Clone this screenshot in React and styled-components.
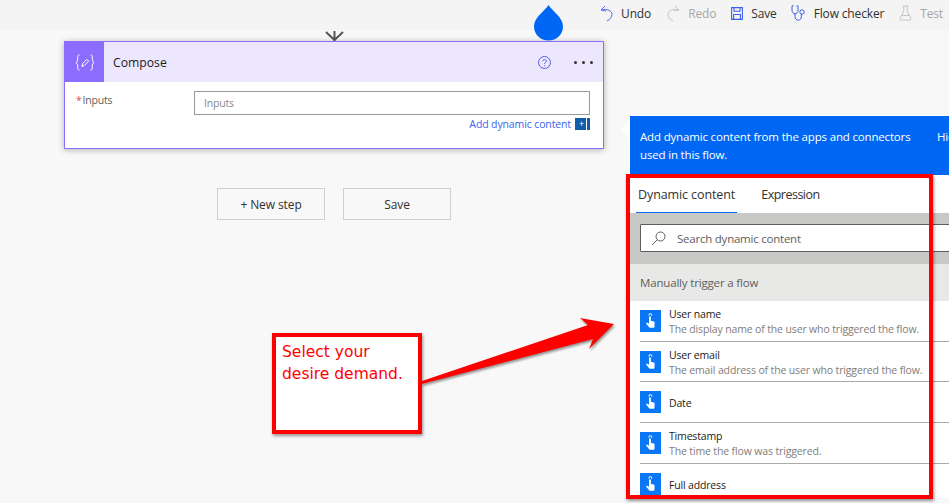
import React from "react";
import styled, { createGlobalStyle } from "styled-components";

const Global = createGlobalStyle`
  html, body { margin: 0; padding: 0; background: #f8f8f8; }
  * { box-sizing: border-box; }
`;
const Page = styled.div`
  position: relative; width: 949px; height: 503px; overflow: hidden;
  background: #f8f8f8; font-family: "Open Sans", "Noto Sans", sans-serif; color: #252423;
`;
const Toolbar = styled.header`
  height: 30px; background: #f4f4f4; display: flex; justify-content: flex-end; align-items: center;
  padding-right: 6px; gap: 15px; padding-bottom: 4px;
`;
const ToolButton = styled.div`
  display: flex; align-items: center; gap: 8px; font-size: 12px; letter-spacing: -0.15px;
  margin-right: ${p => p.$mr || 0}px;
  color: ${p => (p.$off ? "#a6a6a6" : "#323130")};
  svg { display: block; flex: none; }
`;
const Canvas = styled.main`
  width: 540px; margin-left: 64px; display: flex; flex-direction: column; align-items: center;
`;
const Connector = styled.svg`display: block; width: 19px; height: 11px; flex: none;`;
const Card = styled.section`
  width: 540px; height: 108px; background: #fff; border: 1px solid #8c6cff;
  box-shadow: 0 1px 6px rgba(0,0,0,.3);
`;
const CardHead = styled.div`
  height: 40px; background: #ede7fd; display: flex; align-items: center; padding-right: 10px;
`;
const CardIcon = styled.div`
  width: 39px; height: 40px; background: #8a6cff; display: flex; align-items: center; justify-content: center;
  color: #fff; font-size: 17px; flex: none;
`;
const CardTitle = styled.div`margin-left: 9px; font-size: 12.2px; color: #1b1a19; flex: 1;`;
const Dots = styled.div`
  display: flex; gap: 5px; margin-left: 23px; width: 19px;
  i { width: 3px; height: 3px; border-radius: 50%; background: #323130; display: block; flex: none; }
`;
const CardBody = styled.div`padding: 9px 13px 0 11px;`;
const FieldRow = styled.div`display: flex; align-items: flex-start;`;
const Label = styled.div`
  width: 118px; font-size: 10.5px; letter-spacing: -0.2px; color: #605e5c; padding-top: 2px;
  b { color: #e8474f; font-weight: 400; margin-right: 1px; }
`;
const Input = styled.div`
  flex: 1; height: 24px; border: 1px solid #999; font-size: 10.5px; letter-spacing: -0.2px; color: #8a8886;
  padding-left: 9px; line-height: 22px;
`;
const DynamicRow = styled.div`
  display: flex; justify-content: flex-end; align-items: center; gap: 4px; margin-top: 2px;
  font-size: 10.5px; letter-spacing: -0.12px; color: #3b63f0; height: 14px;
`;
const PlusBox = styled.div`
  width: 15px; height: 12px; background: #0f5ea8; color: #fff; font-size: 9px; line-height: 12px;
  display: flex; justify-content: space-between; padding-left: 4px;
  &::after { content: ""; width: 1px; margin-right: 3px; background: #fff; }
`;
const Actions = styled.div`display: flex; gap: 18px; margin-top: 39px;`;
const ActionButton = styled.button`
  width: 108px; height: 32px; background: #f8f8f8; border: 1px solid #cfcfcf; font: inherit;
  font-size: 12px; letter-spacing: -0.1px; color: #323130; padding: 0;
`;
const Drop = styled.svg`position: absolute; left: 533px; top: 4px; width: 31px; height: 37px;`;
const Panel = styled.aside`
  position: absolute; left: 629px; top: 115px; width: 340px; height: 383px; background: #fff;
`;
const PanelClip = styled.div`height: 100%; overflow: hidden;`;
const Caret = styled.div`
  position: absolute; left: -6px; top: 8px; width: 13px; height: 13px; background: #fff; z-index: 1;
  transform: rotate(45deg); clip-path: polygon(0 0, 0 100%, 100% 100%);
`;
const PanelHead = styled.div`
  height: 60px; background: #0067f5; color: #fff; border-left: 1px solid #fff; border-top: 1px solid #fff;
  padding: 12px 0 0 10px; font-size: 11.5px; line-height: 18px; letter-spacing: -0.17px; position: relative;
`;
const HideLink = styled.span`position: absolute; left: 307px; top: 12px;`;
const Tabs = styled.div`height: 38px; display: flex; padding-left: 7px; gap: 22px;`;
const Tab = styled.div`
  height: 38px; padding: 11px 2px 0; font-size: 12.5px;
  letter-spacing: ${p => (p.$active ? "-0.1px" : "-0.5px")}; color: #323130;
  border-bottom: ${p => (p.$active ? "1px solid #0067f5" : "none")};
`;
const SearchBand = styled.div`height: 51px; background: #c8c9c6; padding: 11px 0 0 11px;`;
const SearchBox = styled.div`
  height: 28px; background: #fff; border: 1px solid #605e5c; border-radius: 1px; display: flex; align-items: center;
  padding-left: 10px; gap: 11px; font-size: 11.5px; letter-spacing: -0.23px; color: #605e5c;
`;
const Section = styled.div`
  height: 37px; background: #e8e9e6; padding-left: 11px; font-size: 11.5px; letter-spacing: -0.17px;
  color: #605e5c; line-height: 37px;
`;
const Row = styled.div`
  height: ${p => p.$h}px; margin-left: 11px; border-bottom: 1px solid #aaa; display: flex; align-items: center; gap: 8px;
`;
const RowIcon = styled.div`
  width: 21px; height: 22px; background: #0a78f5; flex: none; display: flex; align-items: center; justify-content: center;
`;
const RowText = styled.div`padding-top: 2px;`;
const RowName = styled.div`font-size: 10.5px; letter-spacing: -0.17px; color: #1b1a19; line-height: 15px;`;
const RowDesc = styled.div`font-size: 10.5px; letter-spacing: -0.14px; color: #7f7d7b; line-height: 15px; white-space: nowrap;`;
const RedFrame = styled.div`
  position: absolute; left: 626px; top: 174px; width: 307px; height: 325px;
  border: 4px solid #ff0000; box-shadow: 1px 2px 3px rgba(0,0,0,.4);
`;
const Callout = styled.div`
  position: absolute; left: 272px; top: 333px; width: 150px; height: 101px; background: #fff;
  border: 4px solid #ff0000; box-shadow: 1px 2px 3px rgba(0,0,0,.4);
  padding: 4px 0 0 6px; color: #f00; font-family: "DejaVu Sans", sans-serif; font-size: 15.5px; line-height: 22px;
`;
const ArrowSvg = styled.svg`position: absolute; left: 415px; top: 310px; width: 205px; height: 80px; overflow: visible;`;

const Hand = () => (
  <svg width="13" height="16" viewBox="0 0 13 16" fill="none">
    <path d="M5 2.5a1.4 1.4 0 1 1 2.6.2" stroke="#fff" strokeWidth="1" />
    <path d="M5 3.5h1.9v4.2l3.6 1v4.8c0 .8-.5 1.3-1.3 1.3H5.6L2 10.5l1-.9 2 1.2z" fill="#fff" />
  </svg>
);

const rows = [
  ["User name", "The display name of the user who triggered the flow.", 41],
  ["User email", "The email address of the user who triggered the flow.", 40],
  ["Date", null, 41],
  ["Timestamp", "The time the flow was triggered.", 41],
  ["Full address", null, 41],
];

export default function App() {
  return (
    <Page>
      <Global />
      <Toolbar>
        <ToolButton $mr={1}>
          <svg width="13" height="17" viewBox="0 0 13 17" fill="none" stroke="#4f6bed" strokeWidth="1">
            <path d="M5 1 1 5l5 1" /><path d="M1.5 5C7 3.5 12 5.5 12 9.5c0 3-2 5-5 6.5" />
          </svg>
          Undo
        </ToolButton>
        <ToolButton $off>
          <svg width="13" height="17" viewBox="0 0 13 17" fill="none" stroke="#c4c4c4" strokeWidth="1">
            <path d="M8 1l4 4-5 1" /><path d="M11.5 5C6 3.5 1 5.5 1 9.5c0 3 2 5 5 6.5" />
          </svg>
          Redo
        </ToolButton>
        <ToolButton $mr={-1}>
          <svg width="12" height="13" viewBox="0 0 12 13" fill="none" stroke="#3b5ff0" strokeWidth="1.1">
            <path d="M.6.6h10.8v11.8H.6z" /><path d="M3 .6v3.6h6V.6M2.6 12.4V7.5h6.8v4.9" />
          </svg>
          Save
        </ToolButton>
        <ToolButton>
          <svg width="15" height="16" viewBox="0 0 15 16" fill="none" stroke="#3b5ff0" strokeWidth="1">
            <path d="M2.5.8H1v4.4c0 2 1.4 3.6 3 3.6s3-1.6 3-3.6V.8H5.5" />
            <path d="M4 8.8v2.700c0 2 1.500 3.700 3.300 3.700s3-1.500 3-3.300V9" />
            <circle cx="11" cy="7" r="2.200" />
          </svg>
          Flow checker
        </ToolButton>
        <ToolButton $off>
          <svg width="13" height="16" viewBox="0 0 13 16" fill="none" stroke="#c4c4c4" strokeWidth="1">
            <path d="M3.500 1h6M4.800 1v5L1 13.500c-.3.800.1 1.500 1 1.500h9c.9 0 1.300-.7 1-1.500L8.200 6V1M3 10.500h7" />
          </svg>
          Test
        </ToolButton>
      </Toolbar>

      <Canvas>
        <Connector viewBox="0 0 19 11" fill="none" stroke="#555" strokeWidth="2">
          <path d="M1 2l8.500 8L18 2M9.500 1v10" />
        </Connector>
        <Card>
          <CardHead>
            <CardIcon>
              <svg width="20" height="19" viewBox="0 0 22 20" fill="none" stroke="#fff" strokeWidth="1.100">
                <path d="M5 1.500C3 1.500 3 3 3 5c0 3-.5 4-2 5 1.500 1 2 2 2 5 0 2 0 3.500 2 3.500" />
                <path d="M17 1.500c2 0 2 1.500 2 3.500 0 3 .5 4 2 5-1.500 1-2 2-2 5 0 2 0 3.500-2 3.500" />
                <path d="M7.500 14.500l1-3.500 4.500-4.500 2 2-4.500 4.500z" />
              </svg>
            </CardIcon>
            <CardTitle>Compose</CardTitle>
            <svg width="13" height="13" viewBox="0 0 13 13" fill="none" stroke="#4f5fe0" strokeWidth="1">
              <circle cx="6.500" cy="6.500" r="6" />
              <path d="M4.800 5.200c0-2.200 3.500-2.200 3.500 0 0 1.300-1.800 1.300-1.800 2.800M6.500 9.300v1" />
            </svg>
            <Dots><i /><i /><i /></Dots>
          </CardHead>
          <CardBody>
            <FieldRow>
              <Label><b>*</b>Inputs</Label>
              <Input>Inputs</Input>
            </FieldRow>
            <DynamicRow>
              Add dynamic content
              <PlusBox>+</PlusBox>
            </DynamicRow>
          </CardBody>
        </Card>
        <Actions>
          <ActionButton>+ New step</ActionButton>
          <ActionButton>Save</ActionButton>
        </Actions>
      </Canvas>

      <Drop viewBox="0 0 31 37">
        <path d="M15.500 1C19 7 30 13 30 22.500 30 30.500 23.500 36.500 15.500 36.500S1 30.500 1 22.500C1 13 12 7 15.500 1z" fill="#0067f5" />
      </Drop>

      <Panel>
        <PanelClip>
          <PanelHead>
            Add dynamic content from the apps and connectors<br />used in this flow.
            <HideLink>Hide</HideLink>
          </PanelHead>
          <Tabs>
            <Tab $active>Dynamic content</Tab>
            <Tab>Expression</Tab>
          </Tabs>
          <SearchBand>
            <SearchBox>
              <svg width="15" height="15" viewBox="0 0 15 15" fill="none" stroke="#605e5c" strokeWidth="1">
                <circle cx="9.500" cy="5.500" r="4.500" /><path d="M6.300 8.700 1 14" />
              </svg>
              Search dynamic content
            </SearchBox>
          </SearchBand>
          <Section>Manually trigger a flow</Section>
          {rows.map(([name, desc, h]) => (
            <Row key={name} $h={h}>
              <RowIcon><Hand /></RowIcon>
              <RowText>
                <RowName>{name}</RowName>
                {desc && <RowDesc>{desc}</RowDesc>}
              </RowText>
            </Row>
          ))}
        </PanelClip>
        <Caret />
      </Panel>

      <RedFrame />
      <Callout>Select your<br />desire demand.</Callout>
      <ArrowSvg viewBox="415 310 205 80">
        <polygon points="422,381 588,325 580,318 614,324 589,349 593,339 422,384" fill="#f00" style={{ filter: "drop-shadow(1px 2px 1px rgba(0,0,0,.4))" }} />
      </ArrowSvg>
    </Page>
  );
}
